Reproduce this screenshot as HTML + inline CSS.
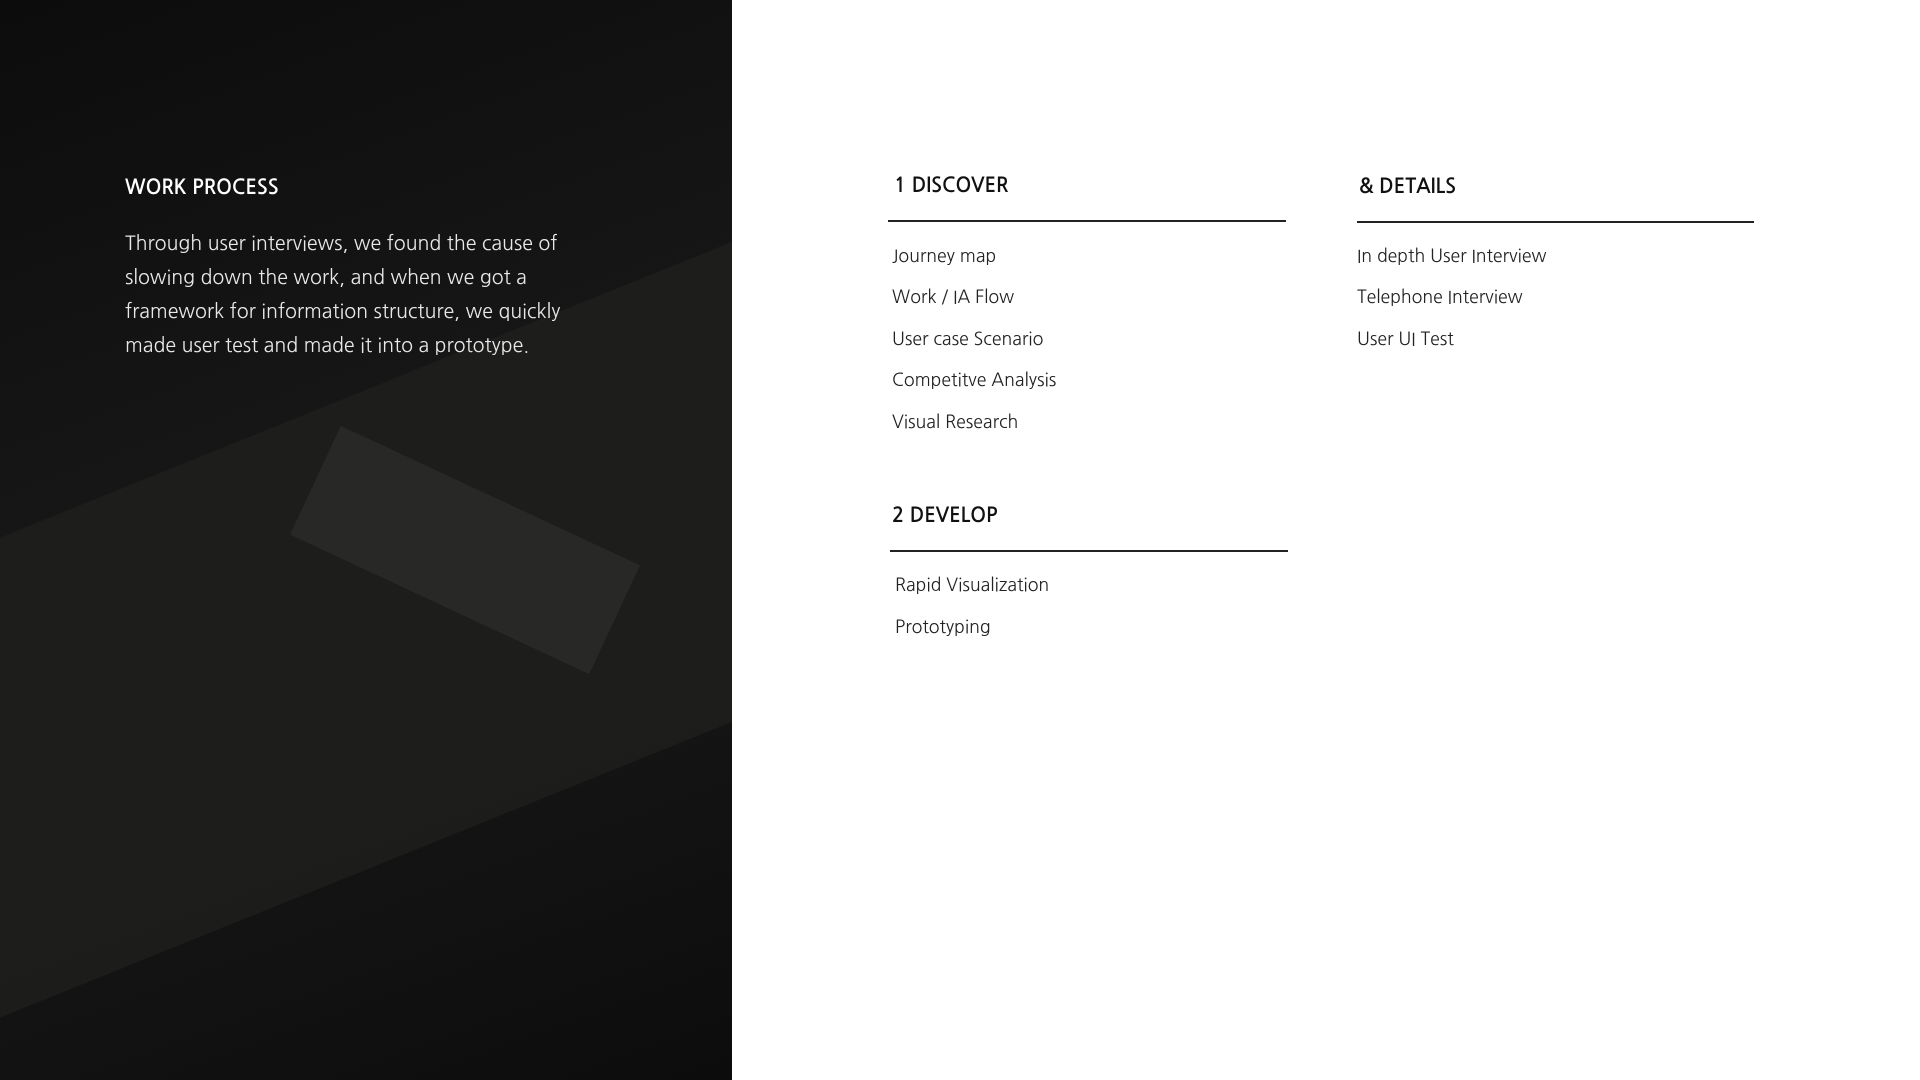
<!DOCTYPE html>
<html><head><meta charset="utf-8"><style>
*{margin:0;padding:0;box-sizing:border-box}
body{width:1920px;height:1080px;position:relative;background:#fff;font-family:"NanumGothic","Liberation Sans",sans-serif;overflow:hidden}
.left{position:absolute;left:0;top:0;width:732px;height:1080px;background:linear-gradient(160deg,#0c0c0c 0%,#151515 35%,#181818 55%,#121212 80%,#0c0c0c 100%);overflow:hidden}
.desk{position:absolute;left:-60px;top:380px;width:900px;height:480px;background:#1f1e1c;transform:skewY(-22deg);opacity:.85}
.pad{position:absolute;left:300px;top:490px;width:330px;height:120px;background:#2e2d2b;transform:rotate(25deg);opacity:.7}
.left h2{position:absolute;left:125px;top:177px;color:#fff;font-size:20px;font-weight:bold}
.left p{position:absolute;left:125px;top:226px;width:470px;color:#e8e8e8;font-size:19.6px;line-height:34px}
.h{position:absolute;font-size:20px;font-weight:bold;color:#111}
.line{position:absolute;height:2px;background:#222}
.it{position:absolute;font-size:17.7px;color:#222}
</style></head><body>
<div class="left"><div class="desk"></div><div class="pad"></div>
<h2>WORK PROCESS</h2>
<p>Through user interviews, we found the cause of slowing down the work, and when we got a framework for information structure, we quickly made user test and made it into a prototype.</p></div>

<div class="h" style="left:894px;top:175px">1 DISCOVER</div>
<div class="line" style="left:888px;top:220px;width:398px"></div>
<div class="it" style="left:892px;top:245px">Journey map</div>
<div class="it" style="left:892px;top:286px">Work / IA Flow</div>
<div class="it" style="left:892px;top:328px">User case Scenario</div>
<div class="it" style="left:892px;top:369px">Competitve Analysis</div>
<div class="it" style="left:892px;top:411px">Visual Research</div>

<div class="h" style="left:1359px;top:176px">&amp; DETAILS</div>
<div class="line" style="left:1357px;top:221px;width:397px"></div>
<div class="it" style="left:1357px;top:245px">In depth User Interview</div>
<div class="it" style="left:1357px;top:286px">Telephone Interview</div>
<div class="it" style="left:1357px;top:328px">User UI Test</div>

<div class="h" style="left:892px;top:505px">2 DEVELOP</div>
<div class="line" style="left:890px;top:550px;width:398px"></div>
<div class="it" style="left:895px;top:574px">Rapid Visualization</div>
<div class="it" style="left:895px;top:616px">Prototyping</div>
</body></html>
